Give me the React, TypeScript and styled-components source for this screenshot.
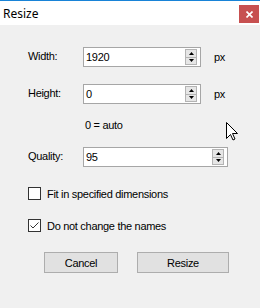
import styled, { createGlobalStyle } from "styled-components";

const GlobalStyle = createGlobalStyle`
    html, body {
        margin: 0;
        padding: 0;
        background: #f0f0f0;
    }
`;

const Window = styled.div`
    position: relative;
    width: 260px;
    height: 308px;
    box-sizing: border-box;
    background: #f0f0f0;
    border-top: 1px solid #1883d7;
    font-family: "Liberation Sans", Arial, sans-serif;
    font-size: 11px;
    letter-spacing: -0.3px;
    color: #000;
    overflow: hidden;
`;

const TitleBar = styled.div`
    display: flex;
    align-items: center;
    justify-content: space-between;
    height: 24px;
    background: #fff;
`;

const Title = styled.span`
    font-family: "Noto Sans", "Open Sans", sans-serif;
    font-size: 12px;
    letter-spacing: 0;
    margin-left: 3px;
    margin-top: 1px;
`;

const CloseButton = styled.div`
    display: flex;
    align-items: center;
    justify-content: center;
    width: 20px;
    height: 18px;
    margin-right: 1px;
    margin-top: 2px;
    background: #c75050;
`;

const Content = styled.div`
    display: flex;
    flex-direction: column;
    padding-left: 28px;
`;

const Row = styled.div<{ top: number }>`
    display: flex;
    align-items: center;
    height: 20px;
    margin-top: ${(p) => p.top}px;
`;

const Label = styled.span`
    width: 55px;
    margin-top: -2px;
`;

const Field = styled.div<{ width: number }>`
    display: flex;
    align-items: center;
    box-sizing: border-box;
    width: ${(p) => p.width}px;
    height: 20px;
    background: #fff;
    border: 1px solid #a6a6a6;
`;

const FieldText = styled.span`
    flex: 1;
    padding-left: 2px;
`;

const Spinner = styled.div`
    display: flex;
    flex-direction: column;
    width: 12px;
    height: 16px;
    margin-right: 3px;
`;

const SpinHalf = styled.div`
    display: flex;
    align-items: center;
    justify-content: center;
    flex: 1;
    box-sizing: border-box;
    background: #e6e6e6;
    border: 1px solid #b4b4b4;
    & + & {
        border-top: none;
    }
`;

const Unit = styled.span`
    margin-left: 13px;
`;

const Hint = styled.div`
    margin-top: 15px;
    margin-left: 57px;
    line-height: 13px;
`;

const CheckRow = styled.label<{ top: number }>`
    display: flex;
    align-items: center;
    height: 13px;
    margin-top: ${(p) => p.top}px;
`;

const Box = styled.span`
    display: flex;
    align-items: center;
    justify-content: center;
    box-sizing: border-box;
    width: 13px;
    height: 13px;
    background: #fff;
    border: 1px solid #333;
    margin-right: 6px;
`;

const Buttons = styled.div`
    display: flex;
    gap: 19px;
    margin-top: 20px;
    margin-left: 16px;
`;

const Button = styled.div<{ width: number }>`
    display: flex;
    align-items: center;
    justify-content: center;
    box-sizing: border-box;
    width: ${(p) => p.width}px;
    height: 21px;
    background: #e1e1e1;
    border: 1px solid #adadad;
`;

const Cursor = styled.svg`
    position: absolute;
    left: 226px;
    top: 121px;
`;

function Arrows() {
    return (
        <Spinner>
            <SpinHalf>
                <svg width="5" height="3" viewBox="0 0 5 3">
                    <path d="M2.5 0 L5 3 L0 3 Z" fill="#000" />
                </svg>
            </SpinHalf>
            <SpinHalf>
                <svg width="5" height="3" viewBox="0 0 5 3">
                    <path d="M0 0 L5 0 L2.5 3 Z" fill="#000" />
                </svg>
            </SpinHalf>
        </Spinner>
    );
}

function Check({ checked }: { checked: boolean }) {
    return (
        <Box>
            {checked && (
                <svg width="11" height="11" viewBox="0 0 11 11">
                    <path d="M1.5 5.5 L4 8 L9.5 2.5" fill="none" stroke="#333" strokeWidth="1" />
                </svg>
            )}
        </Box>
    );
}

export default function App() {
    return (
        <Window>
            <GlobalStyle />
            <TitleBar>
                <Title>Resize</Title>
                <CloseButton>
                    <svg width="7" height="7" viewBox="0 0 7 7">
                        <path d="M0.5 0.5 L6.5 6.5 M6.5 0.5 L0.5 6.5" stroke="#fff" strokeWidth="1.6" />
                    </svg>
                </CloseButton>
            </TitleBar>
            <Content>
                <Row top={22}>
                    <Label>Width:</Label>
                    <Field width={118}>
                        <FieldText>1920</FieldText>
                        <Arrows />
                    </Field>
                    <Unit>px</Unit>
                </Row>
                <Row top={17}>
                    <Label>Height:</Label>
                    <Field width={118}>
                        <FieldText>0</FieldText>
                        <Arrows />
                    </Field>
                    <Unit>px</Unit>
                </Row>
                <Hint>0 = auto</Hint>
                <Row top={15}>
                    <Label>Quality:</Label>
                    <Field width={145}>
                        <FieldText>95</FieldText>
                        <Arrows />
                    </Field>
                </Row>
                <CheckRow top={20}>
                    <Check checked={false} />
                    Fit in specified dimensions
                </CheckRow>
                <CheckRow top={19}>
                    <Check checked={true} />
                    Do not change the names
                </CheckRow>
                <Buttons>
                    <Button width={74}>Cancel</Button>
                    <Button width={92}>Resize</Button>
                </Buttons>
            </Content>
            <Cursor width="12" height="19" viewBox="0 0 12 19">
                <path
                    d="M0.5 0.5 L0.5 16.5 L4.5 12.5 L7 18 L9 17 L6.5 11.5 L11.5 11.5 Z"
                    fill="#fff"
                    stroke="#000"
                    strokeWidth="1"
                />
            </Cursor>
        </Window>
    );
}
